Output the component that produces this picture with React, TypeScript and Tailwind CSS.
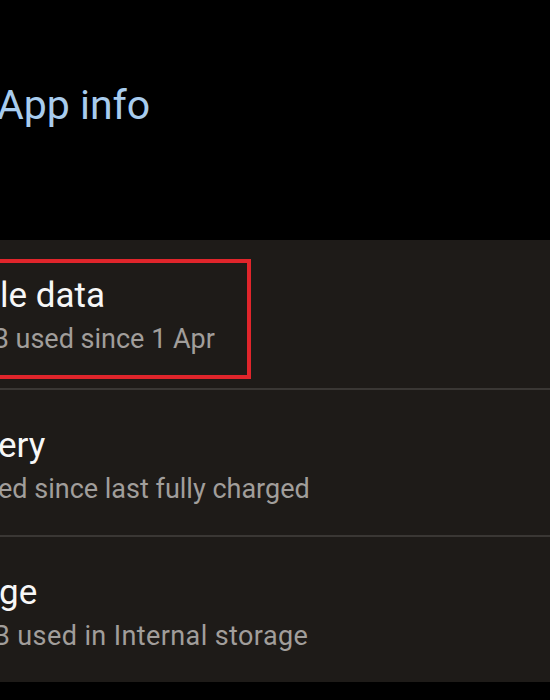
const rows = [
  { title: "le data", titleShift: "ml-0", sub: "B used since 1 Apr", subShift: "ml-[-8px]", marked: true },
  { title: "ery", titleShift: "ml-[-2px]", sub: "ed since last fully charged", subShift: "ml-[-2px]", marked: false },
  { title: "ge", titleShift: "ml-[-1px]", sub: "B used in Internal storage", subShift: "ml-[-7px] tracking-[0.4px]", marked: false },
];

export default function App() {
  return (
    <div className="w-[550px] h-[700px] overflow-hidden bg-black font-['Roboto',sans-serif]">
      {/* Header */}
      <div className="pt-[81px] h-[240px]">
        <h1 className="ml-[-3px] text-[41px] leading-[48px] text-[#a8ccee] whitespace-nowrap">App info</h1>
      </div>

      {/* Settings card */}
      <div className="w-[570px] bg-[#1e1b18]">
        {rows.map((row, i) => (
          <div key={i}>
            {i > 0 && <div className="h-[2px] bg-[#3a3734]" />}
            <div className={`relative ${i === 0 ? "h-[148px]" : "h-[145px]"} pt-[36px]`}>
              <div className={`${row.titleShift} text-[35px] leading-[40px] text-[#f7f7f7] whitespace-nowrap`}>
                {row.title}
              </div>
              <div className={`${row.subShift} mt-[7px] text-[27px] leading-[32px] text-[#a19e9b] whitespace-nowrap`}>
                {row.sub}
              </div>
              {row.marked && (
                <div className="absolute left-[-20px] top-[19px] w-[271px] h-[120px] border-4 border-[#e0252b]" />
              )}
            </div>
          </div>
        ))}
      </div>
    </div>
  );
}
